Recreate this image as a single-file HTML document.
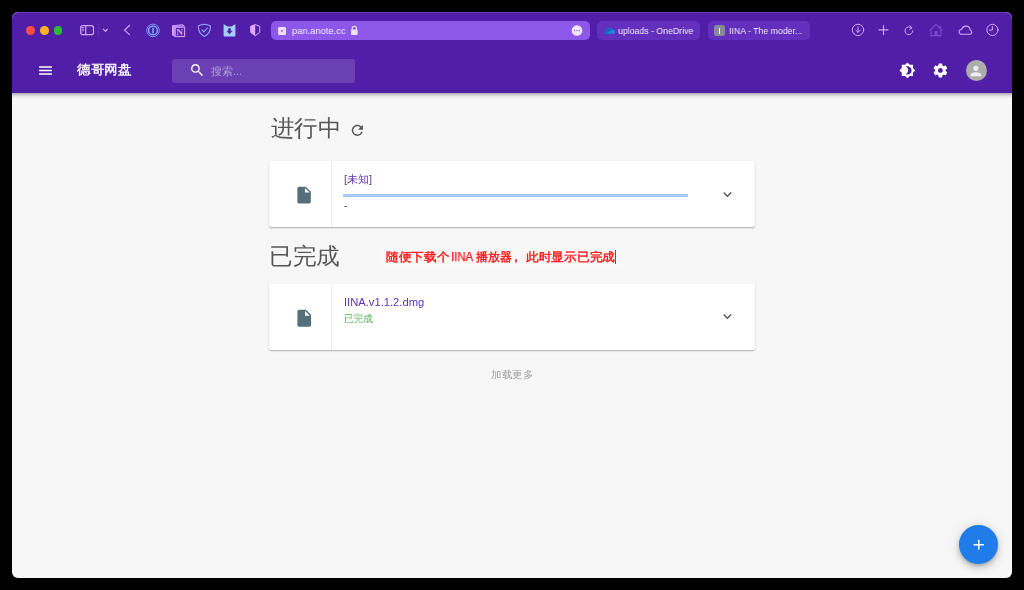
<!DOCTYPE html>
<html><head><meta charset="utf-8">
<style>
*{margin:0;padding:0;box-sizing:border-box}
html,body{width:1024px;height:590px;overflow:hidden;background:#000;font-family:"Liberation Sans",sans-serif}
#win{position:absolute;left:12px;top:12px;width:1000px;height:566px;border-radius:6px;overflow:hidden;background:#f7f7f7}
#in{position:absolute;left:-12px;top:-12px;width:1024px;height:590px}
.a{position:absolute}
.t{position:absolute;white-space:nowrap;will-change:transform}
svg{position:absolute;overflow:visible}
#bar{left:0;top:0;width:1024px;height:93px;background:#511fa7;box-shadow:0 1.4px 2.8px -0.7px rgba(0,0,0,.2),0 2.8px 3.5px 0 rgba(0,0,0,.14),0 0.7px 7px 0 rgba(0,0,0,.12)}
.dot{position:absolute;width:8.6px;height:8.6px;border-radius:50%}
.pill{position:absolute;top:21px;height:19px;border-radius:5px}
.card{position:absolute;left:269px;width:486px;height:66px;background:#fff;border-radius:2px;box-shadow:0 1px 2px rgba(0,0,0,.22),0 1px 1px rgba(0,0,0,.1)}
.card .div{position:absolute;left:62.3px;top:0;width:1.2px;height:66px;background:#efefef}
</style></head><body>
<div id="win"><div id="in">
<div class="a" id="bar"></div>

<!-- traffic lights -->
<div class="dot" style="left:26.2px;top:26.15px;background:#fd4c46"></div>
<div class="dot" style="left:40px;top:26.15px;background:#f9b12a"></div>
<div class="dot" style="left:53.8px;top:26.15px;background:#2bbc35"></div>

<!-- safari toolbar icons -->
<svg style="left:0;top:0" width="1024" height="50">
  <g fill="none" stroke="#d3a5f7" stroke-width="1.2" stroke-linecap="round" stroke-linejoin="round">
    <rect x="80.7" y="25.6" width="12.8" height="9" rx="2.2"/>
    <line x1="85.7" y1="25.6" x2="85.7" y2="34.6"/>
    <line x1="82.2" y1="27.5" x2="83.6" y2="27.5" stroke-width="0.8"/>
    <line x1="82.2" y1="29.1" x2="83.6" y2="29.1" stroke-width="0.8"/>
    <line x1="82.2" y1="30.7" x2="83.6" y2="30.7" stroke-width="0.8"/>
    <polyline points="103.4,29.2 105.45,31.3 107.5,29.2" stroke-width="1.2"/>
    <polyline points="129.5,25.5 124.5,30.1 129.5,34.6" stroke-width="1.2"/>
  </g>
  <line x1="98.5" y1="24" x2="98.5" y2="36" stroke="#5d2db2" stroke-width="1"/>
</svg>

<!-- extensions -->
<svg style="left:0;top:0" width="1024" height="50">
  <!-- 1password -->
  <g fill="none" stroke="#7d9dff">
    <circle cx="153" cy="30.4" r="6.3" stroke-width="0.9"/>
    <circle cx="153" cy="30.4" r="4.4" stroke-width="1.6"/>
  </g>
  <rect x="152.2" y="27.4" width="1.6" height="6" rx="0.5" fill="#7d9dff"/>
  <!-- notion -->
  <path d="M172 25.3 L182.6 24.3 L185.1 26.3 L174.7 26.9 Z" fill="#d6a0ff"/>
  <path d="M172 25.3 L174.7 26.9 L174.7 36.9 L172 34.9 Z" fill="#d6a0ff"/>
  <rect x="175.2" y="27.3" width="9.4" height="9.2" fill="none" stroke="#d6a0ff" stroke-width="1.1"/>
  <line x1="175" y1="25.9" x2="183" y2="25.4" stroke="#8a5ad8" stroke-width="0.5"/>
  <text x="176.2" y="34.7" font-family="Liberation Serif" font-weight="bold" font-size="8.6" fill="#d6a0ff" textLength="6.8" lengthAdjust="spacingAndGlyphs">N</text>
  <!-- adguard -->
  <path d="M204.4 24.4 C201.8 24.4 199.6 25.2 198.3 25.9 C198.3 31 200 34.3 204.4 36.4 C208.8 34.3 210.5 31 210.5 25.9 C209.2 25.2 207 24.4 204.4 24.4 Z" fill="none" stroke="#88a5ff" stroke-width="1.1" stroke-linejoin="round"/>
  <polyline points="201.8,29.9 203.9,31.9 207.4,28" fill="none" stroke="#88a5ff" stroke-width="1.1" stroke-linecap="round" stroke-linejoin="round"/>
  <!-- cat downloader -->
  <path d="M223.6 24.3 Q226 25 227.2 26.6 L231.8 26.6 Q233 25 235.4 24.3 L235.4 35.4 Q235.4 36.6 234.2 36.6 L224.8 36.6 Q223.6 36.6 223.6 35.4 Z" fill="#a3d0ff"/>
  <path d="M228.3 28.3 h2.5 v2.5 h1.8 l-3.05 3.5 l-3.05 -3.5 h1.8 z" fill="#511fa7"/>
  <!-- half shield -->
  <path d="M255.2 24.6 L250.7 26.2 L250.7 32.4 L255.2 35.8 L259.7 32.4 L259.7 26.2 Z" fill="none" stroke="#e0a8ff" stroke-width="1" stroke-linejoin="round"/>
  <path d="M255.2 24.6 L250.7 26.2 L250.7 32.4 L255.2 35.8 Z" fill="#e0a8ff"/>
</svg>

<!-- url bar -->
<div class="pill" style="left:271px;width:319px;background:#8d58ea"></div>
<div class="a" style="left:278px;top:27px;width:8px;height:8px;border-radius:1.5px;background:#ece0fb"></div>
<svg style="left:0;top:0" width="1024" height="50"><path d="M281 29.9 L283 31.9 M283 29.9 L281 31.9" stroke="#8d58ea" stroke-width="0.8"/></svg>
<div class="t" style="left:292.4px;top:24.5px;font-size:9.8px;line-height:12px;color:#f4eefe;transform:scaleX(0.955);transform-origin:0 0">pan.anote.cc</div>
<svg style="left:0;top:0" width="1024" height="50">
  <path d="M352.2 30 v-1.6 a2.1 2.1 0 0 1 4.2 0 v1.6" fill="none" stroke="#ece0fb" stroke-width="1.1"/>
  <rect x="351" y="29.6" width="6.6" height="5.4" rx="0.8" fill="#ece0fb"/>
  <circle cx="577" cy="30.5" r="5.3" fill="#efe6fc"/>
  <circle cx="574.7" cy="30.5" r="0.65" fill="#8d58ea"/>
  <circle cx="577" cy="30.5" r="0.65" fill="#8d58ea"/>
  <circle cx="579.3" cy="30.5" r="0.65" fill="#8d58ea"/>
</svg>

<!-- tabs -->
<div class="pill" style="left:597px;width:103px;background:#6330bd"></div>
<svg style="left:0;top:0" width="1024" height="50">
  <path d="M604 33.8 Q603.4 31.8 605.6 31.2 Q606.4 28.2 609.4 28 Q611.8 27.6 613 29.6 Q615.4 30 615.2 32.4 Q615.2 33.8 613.8 33.8 Z" fill="#1a8ae0"/>
  <path d="M604.2 33.6 Q603.6 32 605.6 31.4 Q606.4 28.4 609.4 28.2 Q611.4 28 612.6 29.8 Q610 30.4 609.4 31.6 Q607.2 32 606.8 33.8 Z" fill="#0f62c4"/>
</svg>
<div class="t" style="left:618px;top:24.5px;font-size:9.3px;line-height:12px;color:#f2ecfd;transform:scaleX(0.94);transform-origin:0 0">uploads - OneDrive</div>
<div class="pill" style="left:708px;width:102px;background:#6330bd"></div>
<div class="a" style="left:714.2px;top:25.2px;width:10.6px;height:10.5px;border-radius:2.5px;background:#878a94"></div>
<div class="a" style="left:719.1px;top:27.5px;width:1px;height:6px;background:#fff"></div>
<div class="t" style="left:729px;top:24.5px;font-size:9.3px;line-height:12px;color:#f2ecfd;transform:scaleX(0.94);transform-origin:0 0">IINA - The moder...</div>

<!-- right toolbar icons -->
<svg style="left:0;top:0" width="1024" height="50">
  <g fill="none" stroke="#d6a5f6" stroke-width="1.0" stroke-linecap="round" stroke-linejoin="round">
    <circle cx="858" cy="29.9" r="5.7"/>
    <path d="M858 27 v5.2 M855.8 30.2 L858 32.4 L860.2 30.2"/>
    <path d="M883.5 25.5 v8.9 M879.05 29.95 h8.9" stroke-width="1.2"/>
    <path d="M911.6 27.9 A3.9 3.9 0 1 0 912.8 30.8"/>
    <path d="M909.9 25.6 L911.9 27.8 L909.7 29.5" stroke-width="1.0"/>
    <path d="M960.8 34.2 A2.65 2.65 0 0 1 961.9 29.1 A4.2 4.2 0 0 1 970.1 30 A2.15 2.15 0 0 1 970 34.2 Z" stroke-width="1.1"/>
    <circle cx="992.4" cy="29.9" r="5.6"/>
    <path d="M992.4 26.5 v3.6 h-3"/>
  </g>
  <g fill="none" stroke="#7a4bcf" stroke-width="1.1" stroke-linejoin="round">
    <path d="M929.6 30.3 L936 24.5 L942.3 30.3 M931 29 v6.6 h9.9 v-6.6 M940.3 25.6 v2.2"/>
  </g>
  <rect x="934.6" y="31" width="2.8" height="4.6" fill="#7a4bcf"/>
</svg>

<!-- app bar -->
<svg style="left:37.2px;top:62.3px" width="17" height="17" viewBox="0 0 24 24"><path fill="#fff" d="M3 18h18v-2H3v2zm0-5h18v-2H3v2zm0-7v2h18V6H3z"/></svg>
<div class="t" style="left:76.5px;top:61px;font-size:13px;line-height:17px;color:#fff;transform:scaleX(1.04);transform-origin:0 0;-webkit-text-stroke:0.35px #fff">德哥网盘</div>
<div class="a" style="left:172px;top:58.7px;width:183px;height:24.1px;border-radius:3px;background:rgba(255,255,255,.15)"></div>
<svg style="left:189px;top:62.2px" width="16.3" height="16.3" viewBox="0 0 24 24"><path fill="#fff" d="M15.5 14h-.79l-.28-.27C15.41 12.59 16 11.11 16 9.5 16 5.91 13.09 3 9.5 3S3 5.91 3 9.5 5.91 16 9.5 16c1.61 0 3.09-.59 4.23-1.57l.27.28v.79l5 4.99L20.49 19l-4.99-5zm-6 0C7.01 14 5 11.99 5 9.5S7.01 5 9.5 5 14 7.01 14 9.5 11.99 14 9.5 14z"/></svg>
<div class="t" style="left:211px;top:63.5px;font-size:11px;line-height:14px;color:rgba(255,255,255,.47)">搜索...</div>
<svg style="left:899.1px;top:62.4px" width="16.8" height="16.8" viewBox="0 0 24 24"><path fill="#fff" d="M20 8.69V4h-4.69L12 .69 8.69 4H4v4.69L.69 12 4 15.31V20h4.69L12 23.31 15.31 20H20v-4.69L23.31 12 20 8.69zM12 18c-.89 0-1.74-.2-2.5-.55C11.56 16.5 13 14.42 13 12s-1.44-4.5-3.5-5.45C10.26 6.2 11.11 6 12 6c3.310 0 6 2.69 6 6s-2.69 6-6 6z"/></svg>
<svg style="left:932.1px;top:62.25px" width="16.8" height="16.8" viewBox="0 0 24 24"><path fill="#fff" d="M19.43 12.98c.04-.32.07-.64.07-.98s-.03-.66-.07-.98l2.11-1.650c.19-.15.24-.42.12-.64l-2-3.46c-.12-.22-.39-.3-.61-.22l-2.49 1c-.52-.4-1.08-.73-1.69-.98l-.38-2.65C14.460 2.18 14.25 2 14 2h-4c-.25 0-.46.18-.49.42l-.38 2.65c-.61.25-1.17.59-1.69.98l-2.49-1c-.23-.09-.49 0-.61.22l-2 3.46c-.13.22-.07.49.12.64l2.11 1.65c-.04.32-.07.65-.07.98s.03.66.07.98l-2.11 1.65c-.19.15-.24.42-.12.64l2 3.46c.12.22.39.3.61.22l2.49-1c.52.4 1.08.73 1.69.98l.38 2.65c.03.24.24.42.49.42h4c.25 0 .46-.18.49-.42l.38-2.65c.61-.25 1.17-.59 1.690-.98l2.49 1c.23.09.49 0 .61-.22l2-3.46c.12-.22.07-.49-.12-.64l-2.11-1.65zM12 15.5c-1.93 0-3.5-1.57-3.5-3.5s1.57-3.5 3.5-3.5 3.5 1.57 3.5 3.5-1.57 3.5-3.5 3.5z"/></svg>
<div class="a" style="left:965.5px;top:60.1px;width:21px;height:21px;border-radius:50%;background:#adadad;overflow:hidden">
<svg style="left:2.6px;top:2.6px" width="15.8" height="15.8" viewBox="0 0 24 24"><path fill="#f0f0f0" d="M12 12c2.21 0 4-1.79 4-4s-1.790-4-4-4-4 1.79-4 4 1.79 4 4 4zm0 2c-2.67 0-8 1.34-8 4v2h16v-2c0-2.66-5.33-4-8-4z"/></svg>
</div>

<!-- content -->
<div class="t" style="left:270.5px;top:113.8px;font-size:23px;line-height:28px;color:#575757;transform:scaleX(1.02);transform-origin:0 0">进行中</div>
<svg style="left:349.2px;top:121.6px" width="16.7" height="16.7" viewBox="0 0 24 24"><path fill="#555" d="M17.65 6.35C16.2 4.9 14.21 4 12 4c-4.42 0-7.99 3.58-7.99 8s3.57 8 7.99 8c3.73 0 6.84-2.55 7.73-6h-2.08c-.82 2.33-3.04 4-5.65 4-3.310 0-6-2.69-6-6s2.69-6 6-6c1.66 0 3.14.69 4.22 1.78L13 11h7V4l-2.35 2.35z"/></svg>

<div class="card" style="top:161px"><div class="div"></div></div>
<svg style="left:293.9px;top:185.3px" width="20.2" height="20.2" viewBox="0 0 24 24"><path fill="#546e7a" d="M6 2c-1.1 0-1.99.9-1.99 2L4 20c0 1.1.89 2 1.99 2H18c1.1 0 2-.9 2-2V8l-6-6H6zm7 7V3.5L18.5 9H13z"/></svg>
<div class="t" style="left:343.5px;top:172.1px;font-size:11px;line-height:14px;color:#6232b8">[未知]</div>
<div class="a" style="left:343.2px;top:194px;width:344.8px;height:2.6px;background:#9fcbf5"></div>
<div class="t" style="left:343.6px;top:199.4px;font-size:10px;line-height:14px;color:#444">-</div>
<svg style="left:718.7px;top:185.6px" width="16.8" height="16.8" viewBox="0 0 24 24"><path fill="#555" d="M16.59 8.59L12 13.17 7.41 8.59 6 10l6 6 6-6z"/></svg>

<div class="t" style="left:269px;top:242px;font-size:23px;line-height:28px;color:#575757;transform:scaleX(1.03);transform-origin:0 0">已完成</div>
<div class="a" style="left:379px;top:248px;width:245px;height:20.4px;background:#f8f8f8"></div>
<div class="t" style="left:385.7px;top:250px;font-size:12px;line-height:15px;color:#ff1414;transform:scaleX(1.053);transform-origin:0 0;-webkit-text-stroke:0.4px #ff1414">随便下载个</div>
<div class="t" style="left:451.3px;top:249.9px;font-size:12px;line-height:15px;color:#ff1414;-webkit-text-stroke:0.25px #ff1414;transform:scaleX(0.95);transform-origin:0 0">IINA</div>
<div class="t" style="left:475.5px;top:250px;font-size:12px;line-height:15px;color:#ff1414;-webkit-text-stroke:0.4px #ff1414">播放器</div>
<div class="t" style="left:509.6px;top:250px;font-size:12px;line-height:15px;color:#ff1414;font-weight:700">，</div>
<div class="t" style="left:525.8px;top:250px;font-size:12px;line-height:15px;color:#ff1414;transform:scaleX(1.06);transform-origin:0 0;-webkit-text-stroke:0.4px #ff1414">此时显示已完成</div>
<div class="a" style="left:615.2px;top:250px;width:1px;height:14px;background:#ff1414"></div>

<div class="card" style="top:284px"><div class="div"></div></div>
<svg style="left:293.5px;top:307.7px" width="20.5" height="20.5" viewBox="0 0 24 24"><path fill="#546e7a" d="M6 2c-1.1 0-1.99.9-1.99 2L4 20c0 1.1.89 2 1.99 2H18c1.1 0 2-.9 2-2V8l-6-6H6zm7 7V3.5L18.5 9H13z"/></svg>
<div class="t" style="left:343.6px;top:295.2px;font-size:11.2px;line-height:14px;color:#6232b8">IINA.v1.1.2.dmg</div>
<div class="t" style="left:343.5px;top:312.9px;font-size:10px;line-height:12px;color:#4caf50;transform:scaleX(0.955);transform-origin:0 0">已完成</div>
<svg style="left:718.7px;top:308.3px" width="16.8" height="16.8" viewBox="0 0 24 24"><path fill="#555" d="M16.59 8.59L12 13.17 7.41 8.59 6 10l6 6 6-6z"/></svg>

<div class="t" style="left:490.5px;top:368px;font-size:10px;line-height:14px;color:#9e9e9e;transform:scaleX(1.054);transform-origin:0 0">加载更多</div>

<div class="a" style="left:959px;top:524.7px;width:39px;height:39px;border-radius:50%;background:#1f7ce9;box-shadow:0 2.1px 3.5px -0.7px rgba(0,0,0,.2),0 4.2px 7px 0 rgba(0,0,0,.14),0 0.7px 12.6px 0 rgba(0,0,0,.12)"></div>
<svg style="left:969.5px;top:535.5px" width="17.5" height="17.5" viewBox="0 0 24 24"><path fill="#fff" d="M19 13h-6v6h-2v-6H5v-2h6V5h2v6h6v2z"/></svg>
</div></div>
<div style="position:absolute;left:12px;top:12px;width:1000px;height:566px;border-radius:6px;box-shadow:inset 0 1px 0 rgba(255,255,255,.14)"></div>
</body></html>
